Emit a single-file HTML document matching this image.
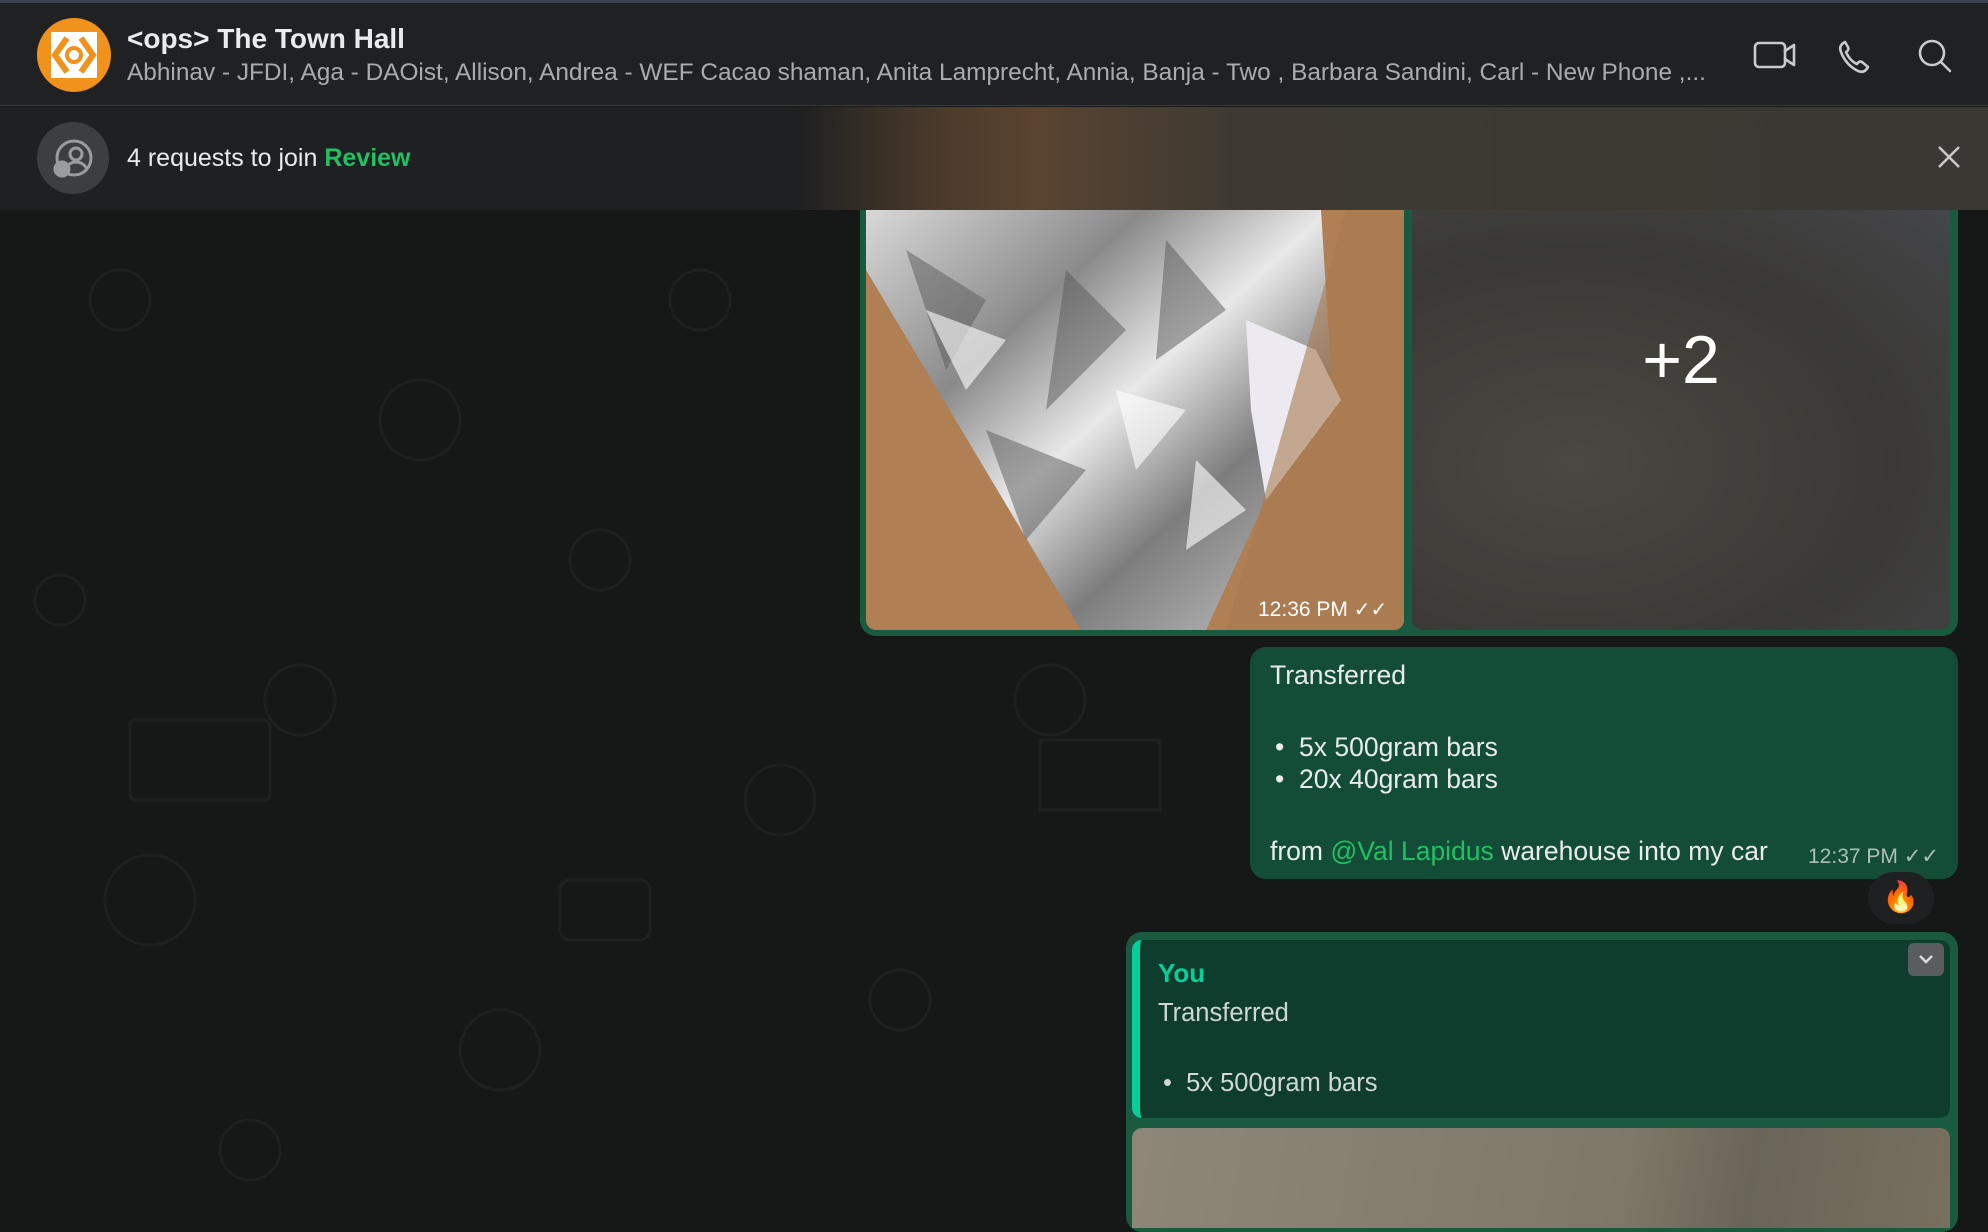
<!DOCTYPE html>
<html><head><meta charset="utf-8"><style>
*{margin:0;padding:0;box-sizing:border-box}
body{width:1988px;height:1220px;overflow:hidden;background:#161717;font-family:"Liberation Sans",sans-serif;position:relative}
.abs{position:absolute}
#hdr{left:0;top:0;width:1988px;height:106px;background:#202123;border-top:3px solid #3a4150;border-bottom:1px solid #3b3c3e;z-index:5}
#ban{left:0;top:107px;width:1988px;height:103px;background:linear-gradient(90deg,#1f2021 0%,#1f2021 40%,#4a3a2a 47%,#5a4430 52%,#3e3a33 62%,#3a3833 100%);z-index:5}
.bub{background:#144d37;border-radius:16px}
.t{color:#e9ecec;font-size:26.5px;white-space:nowrap}
</style></head><body>
<svg class="abs" style="left:0;top:0" width="1988" height="1220">
<g fill="none" stroke="#1e2020" stroke-width="3">
<circle cx="120" cy="300" r="30"/><circle cx="420" cy="420" r="40"/><circle cx="300" cy="700" r="35"/><circle cx="150" cy="900" r="45"/><circle cx="600" cy="560" r="30"/><circle cx="500" cy="1050" r="40"/><circle cx="780" cy="800" r="35"/><circle cx="900" cy="1000" r="30"/><circle cx="60" cy="600" r="25"/><circle cx="700" cy="300" r="30"/><circle cx="1050" cy="700" r="35"/><circle cx="250" cy="1150" r="30"/>
<rect x="130" y="720" width="140" height="80" rx="6"/><rect x="560" y="880" width="90" height="60" rx="10"/><rect x="1040" y="740" width="120" height="70"/>
</g></svg>
<div id="hdr" class="abs">
 <svg class="abs" style="left:37px;top:15px" width="74" height="74"><circle cx="37" cy="37" r="37" fill="#f0921c"/><rect x="14" y="14" width="46" height="46" fill="#fff"/><path d="M30 20 L18 37 L30 54 M44 20 L56 37 L44 54" stroke="#f0921c" stroke-width="6" fill="none"/><circle cx="37" cy="37" r="7" fill="none" stroke="#f0921c" stroke-width="4"/></svg>
 <div class="abs" style="left:127px;top:20px;color:#e9ecec;font-size:28px;font-weight:bold">&lt;ops&gt; The Town Hall</div>
 <div class="abs" style="left:127px;top:56px;color:#a9acad;font-size:24.4px;white-space:nowrap">Abhinav - JFDI, Aga - DAOist, Allison, Andrea - WEF Cacao shaman, Anita Lamprecht, Annia, Banja - Two , Barbara Sandini, Carl - New Phone ,...</div>
 <svg class="abs" style="left:1750px;top:30px" width="220" height="50" fill="none" stroke="#c8cacb" stroke-width="2.6" stroke-linecap="round" stroke-linejoin="round">
  <rect x="5" y="10" width="30" height="24" rx="4"/><path d="M35 18 L44 12 V32 L35 26"/>
  <path d="M95 9 c-4 2 -6 5 -4 10 c3 8 9 15 17 19 c5 2 8 0 10 -4 l-6 -5 c-2 -1 -4 0 -5 2 c-5 -2 -9 -7 -11 -12 c2 -1 3 -3 2 -5 z"/>
  <circle cx="182" cy="20" r="12"/><path d="M191 29 L200 38"/>
 </svg>
</div>
<div id="ban" class="abs">
 <div class="abs" style="left:37px;top:15px;width:72px;height:72px;border-radius:50%;background:#3d3e40"></div>
 <svg class="abs" style="left:50px;top:28px" width="46" height="46" fill="none" stroke="#9a9c9e" stroke-width="3"><circle cx="24" cy="23" r="17"/><circle cx="26" cy="19" r="6"/><path d="M15 36 c2 -7 7 -9 11 -9 s9 2 11 8"/><circle cx="12" cy="34" r="7" fill="#9a9c9e"/></svg>
 <div class="abs t" style="left:127px;top:37px;font-size:25px">4 requests to join <b style="color:#21c063">Review</b></div>
 <svg class="abs" style="left:1937px;top:38px" width="24" height="24" stroke="#c8c8c8" stroke-width="2.6"><path d="M2 2 L22 22 M22 2 L2 22"/></svg>
</div>
<div class="abs bub" style="left:860px;top:190px;width:1098px;height:446px;background:#1a5a40;border-radius:0 0 16px 16px"></div>
<div class="abs" style="left:866px;top:210px;width:538px;height:420px;overflow:hidden;border-radius:0 0 10px 10px;background:#b08054">
 <svg width="538" height="420" class="abs" style="left:0;top:0">
  <defs><linearGradient id="f" x1="0" y1="0" x2="1" y2="1"><stop offset="0" stop-color="#d8d8d8"/><stop offset=".3" stop-color="#8a8a8a"/><stop offset=".5" stop-color="#e8e8e8"/><stop offset=".7" stop-color="#7d7d7d"/><stop offset="1" stop-color="#c8c8c8"/></linearGradient></defs>
  <path d="M0 0 L455 0 L465 160 L395 300 L340 420 L215 420 L0 60 Z" fill="url(#f)"/>
  <path d="M40 40 L120 90 L80 160 Z M200 60 L260 120 L180 200Z M120 220 L220 260 L160 330Z M300 30 L360 100 L290 150Z" fill="#5a5a5a" opacity=".5"/>
  <path d="M60 100 L140 130 L100 180Z M250 180 L320 200 L270 260Z M330 250 L380 300 L320 340Z" fill="#fff" opacity=".6"/>
  <path d="M380 110 L450 140 L475 190 L400 290 L385 200 Z" fill="#eceaf0"/>
  <path d="M480 0 L538 0 L538 420 L360 420 Z" fill="#a87a50" opacity=".6"/>
 </svg>
 <div class="abs" style="left:392px;top:387px;color:#fff;font-size:21px">12:36 PM <span style="font-size:20px">✓✓</span></div>
</div>
<div class="abs" style="left:1412px;top:210px;width:538px;height:420px;overflow:hidden;border-radius:0 0 10px 10px;background:radial-gradient(ellipse at 30% 60%,#4a4842,#3a3935 60%,#45464a)">
 <div class="abs" style="left:0;top:0;width:538px;height:420px;text-align:center;line-height:300px;color:#fff;font-size:68px">+2</div>
</div>
<div class="abs bub" style="left:1250px;top:647px;width:708px;height:232px"></div>
<div class="abs t" style="left:1270px;top:660px">Transferred</div>
<div class="abs t" style="left:1275px;top:732px">•&nbsp; 5x 500gram bars</div>
<div class="abs t" style="left:1275px;top:764px">•&nbsp; 20x 40gram bars</div>
<div class="abs t" style="left:1270px;top:836px">from <span style="color:#21c063">@Val Lapidus</span> warehouse into my car</div>
<div class="abs" style="left:1808px;top:844px;color:#a9c0b4;font-size:21px">12:37 PM <span>✓✓</span></div>
<div class="abs" style="left:1868px;top:872px;width:66px;height:52px;border-radius:26px;background:#1f2021;text-align:center;line-height:52px;font-size:30px;color:#f36b1c">🔥</div>
<div class="abs bub" style="left:1126px;top:932px;width:832px;height:300px;background:#1a5a40"></div>
<div class="abs" style="left:1132px;top:940px;width:818px;height:178px;background:#0f3d2d;border-radius:10px;border-left:8px solid #06cf9c"></div>
<div class="abs" style="left:1158px;top:958px;color:#06cf9c;font-size:26px;font-weight:bold">You</div>
<div class="abs" style="left:1158px;top:999px;color:#d0d7d4;font-size:25.5px">Transferred</div>
<div class="abs" style="left:1163px;top:1069px;color:#d0d7d4;font-size:25.5px">•&nbsp; 5x 500gram bars</div>
<div class="abs" style="left:1908px;top:943px;width:36px;height:33px;border-radius:6px;background:#5a5c5e"></div>
<svg class="abs" style="left:1918px;top:952px" width="16" height="14" fill="none" stroke="#ddd" stroke-width="2.4"><path d="M2 4 L8 10 L14 4"/></svg>
<div class="abs" style="left:1132px;top:1128px;width:818px;height:100px;border-radius:10px 10px 0 0;background:linear-gradient(100deg,#8e8676,#7f7868 60%,#6a6558 75%,#77705f)"></div>
</body></html>
